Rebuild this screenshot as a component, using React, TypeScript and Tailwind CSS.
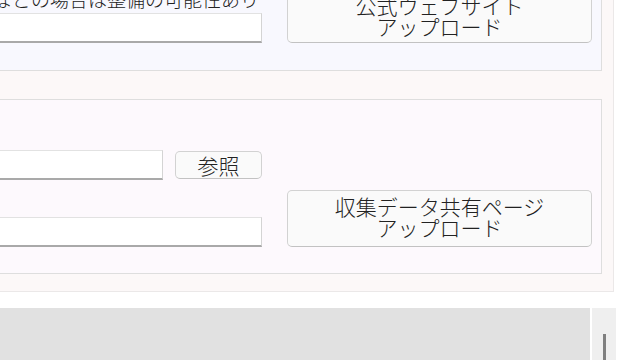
const fieldClass =
  'block h-[30px] w-full rounded-none border border-[#e2e2e2] border-r-[#d4d4d4] border-b-2 border-b-[#a9a9a9] bg-white px-2 text-[16px] outline-none';

const bigButtonClass =
  'flex w-[305px] shrink-0 flex-col items-center justify-center rounded-[5px] border border-[#d2d2d2] border-b-[#c2c2c2] bg-[#fafafa] text-[21px] leading-[21px] text-[#222]';

function UploadButton({ lines, pad }: { lines: string[]; pad: string }) {
  return (
    <button type="button" className={`${bigButtonClass} ${pad}`}>
      {lines.map((l) => (
        <span key={l}>{l}</span>
      ))}
    </button>
  );
}

export default function App() {
  return (
    <div className="h-[360px] w-[640px] overflow-hidden bg-white font-['Noto_Sans_CJK_JP','Noto_Sans',sans-serif] font-light text-[#222]">
      {/* upload panels, page scrolled so the left side is out of view */}
      <div className="-ml-[80px] -mt-[36px] w-[694px] border-r border-b border-[#ebe8e8] bg-[#fcf8f8] pt-[11px] pr-[11px] pb-[17px] pl-[11px]">
        <section className="border border-[#dedede] bg-[#f8f8fe] pt-[10px] pr-[9px] pb-[27px] pl-[6px]">
          <div className="flex items-end gap-[25px]">
            <div className="flex min-w-0 flex-1 flex-col gap-[4px]">
              <p className="whitespace-nowrap pr-[3px] text-right text-[19px] leading-[21px]">
                時期などの場合は整備の可能性あり
              </p>
              <input type="text" readOnly className={fieldClass} />
            </div>
            <UploadButton lines={['公式ウェブサイト', 'アップロード']} pad="pt-[8px] pb-[5px]" />
          </div>
        </section>

        <section className="mt-[28px] border border-[#dedede] bg-[#fdf9fd] pt-[50px] pr-[9px] pb-[26px] pl-[6px]">
          <div className="flex items-end gap-[25px]">
            <div className="flex min-w-0 flex-1 flex-col gap-[37px]">
              <div className="flex items-center gap-[12px]">
                <input type="text" readOnly className={fieldClass + ' flex-1'} />
                <button
                  type="button"
                  className="h-[28px] w-[87px] shrink-0 rounded-[5px] border border-[#d2d2d2] border-b-[#c2c2c2] bg-[#fafafa] text-[21px] leading-[21px] text-[#222]"
                >
                  参照
                </button>
              </div>
              <input type="text" readOnly className={fieldClass} />
            </div>
            <UploadButton lines={['収集データ共有ページ', 'アップロード']} pad="pt-[5px] pb-[8px]" />
          </div>
        </section>
      </div>

      {/* lower grey strip */}
      <div className="mt-[16px] flex h-[60px] w-[616px] gap-[2px]">
        <div className="flex-1 bg-[#e1e1e1]" />
        <div className="flex w-[24px] justify-center bg-[#efefef] pt-[26px]">
          <div className="h-full w-[3px] bg-[#7f7f7f]" />
        </div>
      </div>
    </div>
  );
}
